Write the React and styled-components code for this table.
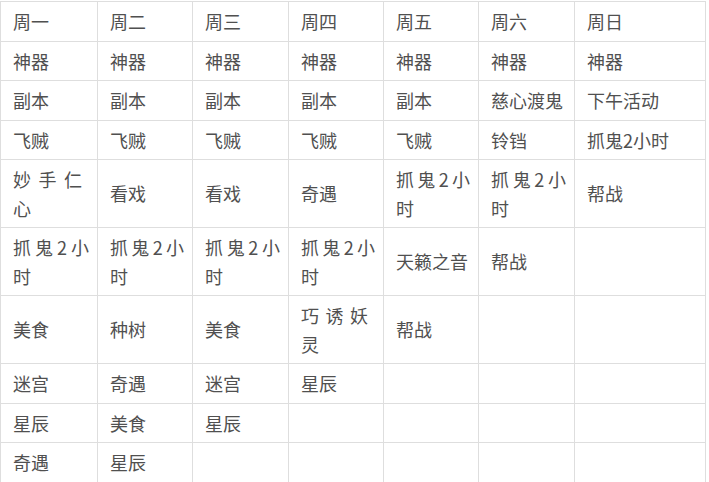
import React from 'react';
import styled, { createGlobalStyle } from 'styled-components';

const GlobalStyle = createGlobalStyle`
  html, body {
    margin: 0;
    padding: 0;
    background: #ffffff;
  }
  body {
    font-family: "Noto Sans CJK SC", "Noto Sans", sans-serif;
  }
`;

const Page = styled.div`
  padding-top: 1px;
  width: 709px;
  overflow: hidden;
`;

const Table = styled.table`
  border-collapse: collapse;
  table-layout: fixed;
  width: 705px;
`;

const Cell = styled.td`
  border: 1px solid #dedede;
  padding: 5px ${(p) => (p.$tight ? '15px' : '8px')} 5px 12px;
  font-size: 18px;
  line-height: 28.5px;
  color: #505050;
  vertical-align: middle;
  text-align: justify;
  word-break: break-all;
`;

const widths = [97, 95, 96, 95, 95, 96, 131];

// cells the source wraps after three characters
const tight = new Set(['妙手仁心', '巧诱妖灵']);

const rows = [
  ['周一', '周二', '周三', '周四', '周五', '周六', '周日'],
  ['神器', '神器', '神器', '神器', '神器', '神器', '神器'],
  ['副本', '副本', '副本', '副本', '副本', '慈心渡鬼', '下午活动'],
  ['飞贼', '飞贼', '飞贼', '飞贼', '飞贼', '铃铛', '抓鬼2小时'],
  ['妙手仁心', '看戏', '看戏', '奇遇', '抓鬼2小时', '抓鬼2小时', '帮战'],
  ['抓鬼2小时', '抓鬼2小时', '抓鬼2小时', '抓鬼2小时', '天籁之音', '帮战', ''],
  ['美食', '种树', '美食', '巧诱妖灵', '帮战', '', ''],
  ['迷宫', '奇遇', '迷宫', '星辰', '', '', ''],
  ['星辰', '美食', '星辰', '', '', '', ''],
  ['奇遇', '星辰', '', '', '', '', ''],
];

export default function App() {
  return (
    <Page>
      <GlobalStyle />
      <Table>
        <colgroup>
          {widths.map((w, i) => (
            <col key={i} style={{ width: w }} />
          ))}
        </colgroup>
        <tbody>
          {rows.map((row, r) => (
            <tr key={r}>
              {row.map((text, c) => (
                <Cell key={c} $tight={tight.has(text)}>
                  {text}
                </Cell>
              ))}
            </tr>
          ))}
        </tbody>
      </Table>
    </Page>
  );
}
